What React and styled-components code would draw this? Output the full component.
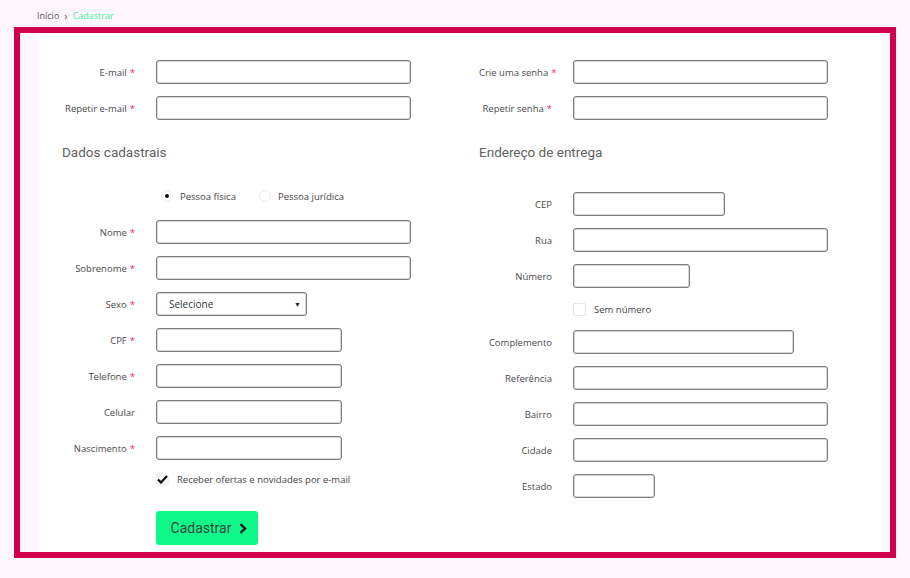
import React, { useState } from "react";
import styled, { createGlobalStyle } from "styled-components";

const GlobalStyle = createGlobalStyle`
  body {
    margin: 0;
    background: #fff6fd;
    font-family: "Open Sans", "Liberation Sans", sans-serif;
    color: #444;
  }
`;

const Breadcrumb = styled.nav`
  height: 27px;
  padding: 4px 0 0 37px;
  display: flex;
  align-items: center;
  gap: 5px;
  font-size: 9px;
  color: #555;
  line-height: 1;
  box-sizing: border-box;
`;

const Crumb = styled.span`
  color: ${(p) => (p.$active ? "#3df59a" : "#555")};
  font-size: ${(p) => (p.$sep ? "11px" : "9px")};
`;

const Frame = styled.div`
  margin: 0 14px;
  border: 6px solid #d1004f;
  background: #fff6fd;
  height: 531px;
  box-sizing: border-box;
  display: flex;
`;

const Panel = styled.form`
  flex: 1;
  margin: 0 6px 0 18px;
  background: #fff;
  padding: 27px 0 0 24px;
  display: grid;
  grid-template-columns: 349px 349px;
  column-gap: 68px;
  align-items: start;
`;

const Column = styled.div`
  display: flex;
  flex-direction: column;
  gap: 12px;
`;

const Row = styled.div`
  display: grid;
  grid-template-columns: 72px ${(p) => p.$width || 255}px;
  column-gap: 22px;
  align-items: center;
  height: ${(p) => p.$height || 24}px;
  margin-top: ${(p) => p.$top || 0}px;
`;

const Label = styled.label`
  font-size: 9.5px;
  text-align: right;
  white-space: nowrap;
  color: #4a4a4a;
  margin-right: -1px;
`;

const Star = styled.span`
  color: #e6245f;
  margin-left: 3px;
`;

const Input = styled.input`
  box-sizing: border-box;
  width: 100%;
  height: 24px;
  border: 1px solid #7d7d7d;
  border-radius: 3px;
  box-shadow: inset 0 0 0 0.5px #b0b0b0;
  background: #fff;
  outline: none;
`;

const Select = styled.div`
  box-sizing: border-box;
  height: 24px;
  border: 1px solid #7d7d7d;
  border-radius: 3px;
  box-shadow: inset 0 0 0 0.5px #b0b0b0;
  display: flex;
  align-items: center;
  justify-content: space-between;
  padding: 0 5px 0 12px;
  font-size: 10px;
  color: #333;
`;

const Caret = styled.span`
  font-size: 7px;
  color: #222;
`;

const Heading = styled.h3`
  margin: 0 0 ${(p) => p.$after || 0}px;
  height: 40px;
  display: flex;
  align-items: center;
  font-family: Roboto, "Liberation Sans", sans-serif;
  font-weight: 400;
  font-size: 13.5px;
  color: #5f5f5f;
`;

const RadioGroup = styled.div`
  grid-column: 2;
  display: flex;
  align-items: center;
  gap: 23px;
  padding-left: 5px;
`;

const RadioOption = styled.label`
  display: flex;
  align-items: center;
  gap: 7px;
  font-size: 9.5px;
  color: #444;
`;

const RadioDot = styled.span`
  width: 12px;
  height: 12px;
  border-radius: 50%;
  border: 1px solid #eaeaea;
  box-sizing: border-box;
  display: flex;
  align-items: center;
  justify-content: center;
  &::after {
    content: "";
    width: 4px;
    height: 4px;
    border-radius: 50%;
    background: ${(p) => (p.$checked ? "#111" : "transparent")};
  }
`;

const CheckRow = styled.label`
  grid-column: 2;
  display: flex;
  align-items: center;
  gap: 8px;
  font-size: 9.5px;
  color: #444;
`;

const CheckBox = styled.span`
  width: 13px;
  height: 13px;
  box-sizing: border-box;
  border: 1px solid ${(p) => (p.$checked ? "#f2f2f2" : "#e6e6e6")};
  background: ${(p) => (p.$checked ? "#f4f4f4" : "#fff")};
  border-radius: 2px;
  display: flex;
  align-items: center;
  justify-content: center;
`;

const SubmitButton = styled.button`
  grid-column: 2;
  justify-self: start;
  width: 102px;
  height: 34px;
  border: none;
  border-radius: 3px;
  background: #0ef98a;
  color: #34463f;
  font-family: Roboto, "Liberation Sans", sans-serif;
  font-size: 14px;
  display: flex;
  align-items: center;
  justify-content: center;
  gap: 8px;
  padding: 0 0 0 4px;
  cursor: pointer;
`;

const Field = ({ label, required, width, top }) => (
  <Row $width={width} $top={top}>
    <Label>
      {label}
      {required && <Star>*</Star>}
    </Label>
    <Input type="text" />
  </Row>
);

const Check = () => (
  <svg width="11" height="9" viewBox="0 0 11 9">
    <path d="M1 4.5 L4 7.5 L10 1" fill="none" stroke="#111" strokeWidth="2.2" />
  </svg>
);

const App = () => {
  const [tipo, setTipo] = useState("fisica");

  return (
    <>
      <GlobalStyle />
      <Breadcrumb>
        <Crumb>Início</Crumb>
        <Crumb $sep>›</Crumb>
        <Crumb $active>Cadastrar</Crumb>
      </Breadcrumb>
      <Frame>
        <Panel onSubmit={(e) => e.preventDefault()}>
          <Column>
            <Field label="E-mail" required />
            <Field label="Repetir e-mail" required />
            <Heading>Dados cadastrais</Heading>
            <Row>
              <RadioGroup>
                <RadioOption onClick={() => setTipo("fisica")}>
                  <RadioDot $checked={tipo === "fisica"} />
                  Pessoa física
                </RadioOption>
                <RadioOption onClick={() => setTipo("juridica")}>
                  <RadioDot $checked={tipo === "juridica"} />
                  Pessoa jurídica
                </RadioOption>
              </RadioGroup>
            </Row>
            <Field label="Nome" required />
            <Field label="Sobrenome" required />
            <Row $width={151}>
              <Label>
                Sexo<Star>*</Star>
              </Label>
              <Select>
                Selecione <Caret>▼</Caret>
              </Select>
            </Row>
            <Field label="CPF" required width={186} />
            <Field label="Telefone" required width={186} />
            <Field label="Celular" width={186} />
            <Field label="Nascimento" required width={186} />
            <Row $height={14}>
              <CheckRow>
                <CheckBox $checked>
                  <Check />
                </CheckBox>
                Receber ofertas e novidades por e-mail
              </CheckRow>
            </Row>
            <Row $height={34} $top={13}>
              <SubmitButton type="submit">
                Cadastrar
                <svg width="8" height="11" viewBox="0 0 8 11">
                  <path d="M1.5 1.2 L6 5.5 L1.5 9.8" fill="none" stroke="#1c1c2a" strokeWidth="2.4" />
                </svg>
              </SubmitButton>
            </Row>
          </Column>
          <Column>
            <Field label="Crie uma senha" required />
            <Field label="Repetir senha" required />
            <Heading $after={8}>Endereço de entrega</Heading>
            <Field label="CEP" width={152} />
            <Field label="Rua" />
            <Field label="Número" width={117} />
            <Row $height={18}>
              <CheckRow>
                <CheckBox />
                Sem número
              </CheckRow>
            </Row>
            <Field label="Complemento" width={221} />
            <Field label="Referência" />
            <Field label="Bairro" />
            <Field label="Cidade" />
            <Field label="Estado" width={82} />
          </Column>
        </Panel>
      </Frame>
    </>
  );
};

export default App;
